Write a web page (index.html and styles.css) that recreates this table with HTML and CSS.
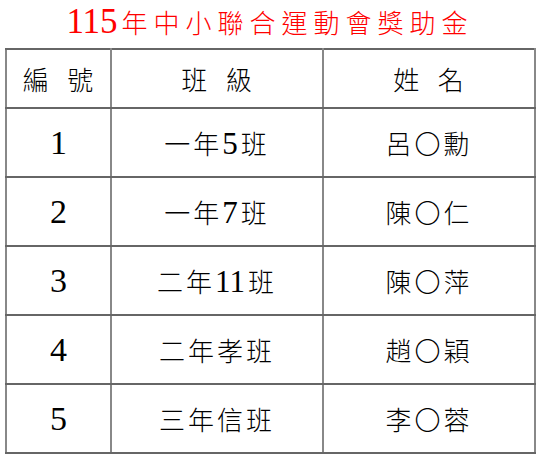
FILE: index.html
```html
<!DOCTYPE html>
<html lang="zh-Hant">
<head>
<meta charset="utf-8">
<title>115年中小聯合運動會獎助金</title>
<link rel="stylesheet" href="styles.css">
</head>
<body>
<div class="page">
  <h1 class="title"><span class="num">115</span>年中小聯合運動會獎助金</h1>
  <table class="award">
    <colgroup>
      <col class="c-no">
      <col class="c-class">
      <col class="c-name">
    </colgroup>
    <thead>
      <tr>
        <th>編 號</th>
        <th>班 級</th>
        <th>姓 名</th>
      </tr>
    </thead>
    <tbody>
      <tr><td class="idx">1</td><td>一年<span class="num">5</span>班</td><td>呂〇勳</td></tr>
      <tr><td class="idx">2</td><td>一年<span class="num">7</span>班</td><td>陳〇仁</td></tr>
      <tr><td class="idx">3</td><td>二年<span class="num">11</span>班</td><td>陳〇萍</td></tr>
      <tr><td class="idx">4</td><td>二年孝班</td><td>趙〇穎</td></tr>
      <tr><td class="idx">5</td><td>三年信班</td><td>李〇蓉</td></tr>
    </tbody>
  </table>
</div>
</body>
</html>
```
FILE: styles.css
```css
html, body {
  margin: 0;
  padding: 0;
  background: #ffffff;
}

body {
  font-family: "Liberation Serif", "Noto Sans CJK TC", serif;
  color: #000000;
}

.page {
  width: 540px;
  height: 460px;
}

.title {
  margin: 0;
  height: 48px;
  line-height: 44px;
  text-align: center;
  color: #ff0000;
  font-size: 26px;
  font-weight: 300;
  letter-spacing: 6px;
  padding-left: 0;
  box-sizing: border-box;
}

.title .num {
  font-size: 35px;
  letter-spacing: 0;
  margin-right: 4px;
}

.award {
  margin-left: 5px;
  width: 529px;
  border-collapse: collapse;
  table-layout: fixed;
}

.c-no { width: 105px; }
.c-class { width: 212px; }
.c-name { width: 212px; }

.award th,
.award td {
  border-left: 2px solid #888888;
  border-right: 2px solid #888888;
  border-top: 2px solid #666666;
  border-bottom: 2px solid #666666;
  padding: 0;
  text-align: center;
  vertical-align: middle;
  font-weight: 300;
  font-size: 26px;
}

.award thead tr {
  height: 59px;
}

.award tbody tr {
  height: 69px;
}

.award th {
  letter-spacing: 6px;
  padding-left: 5px;
}

.award td {
  letter-spacing: 3px;
}

.award td.idx {
  font-size: 34px;
  letter-spacing: 0;
}

.num {
  font-family: "Liberation Serif", serif;
}

.award td .num {
  font-size: 31px;
  letter-spacing: 0;
  margin-right: 3px;
}
```
